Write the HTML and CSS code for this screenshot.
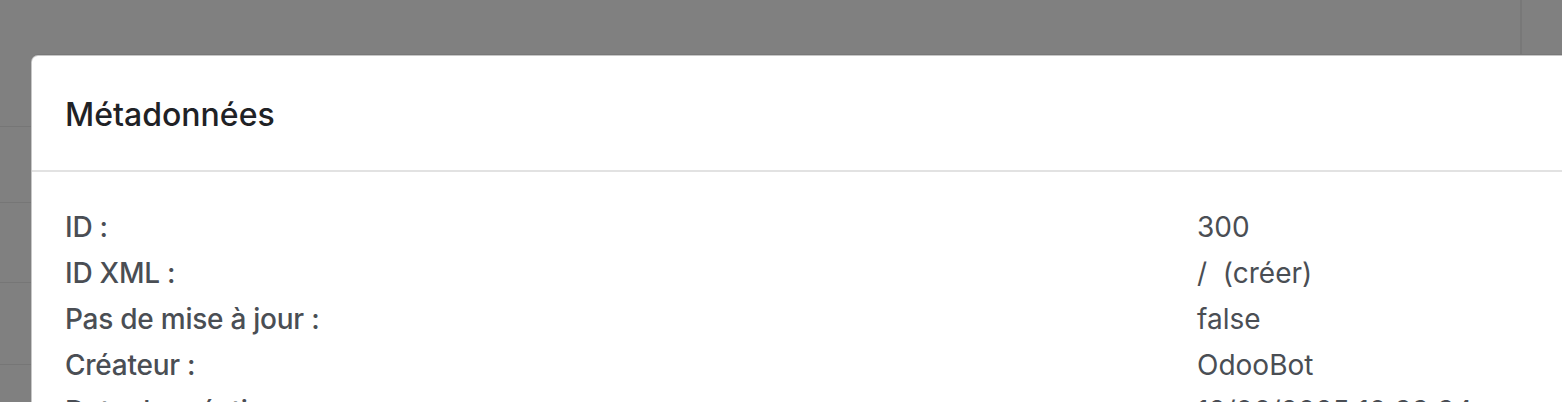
FILE: index.html
```html
<!DOCTYPE html>
<html lang="fr">
<head>
<meta charset="utf-8">
<title>Métadonnées</title>
<link rel="stylesheet" href="styles.css">
</head>
<body>
<div class="backdrop">
  <div class="topbar">
    <div class="topbar-main"></div>
    <div class="topbar-side"></div>
  </div>
  <div class="list">
    <div class="list-row r1"></div>
    <div class="list-row r2"></div>
    <div class="list-row r3"></div>
    <div class="list-row r4"></div>
    <div class="list-row r5"></div>
  </div>
</div>
<div class="modal">
  <header class="modal-header">
    <h4 class="modal-title">Métadonnées</h4>
  </header>
  <div class="modal-body">
    <div class="meta-row"><span class="meta-label">ID :</span><span class="meta-value">300</span></div>
    <div class="meta-row"><span class="meta-label">ID XML :</span><span class="meta-value">/&nbsp; (créer)</span></div>
    <div class="meta-row"><span class="meta-label">Pas de mise à jour :</span><span class="meta-value">false</span></div>
    <div class="meta-row"><span class="meta-label">Créateur :</span><span class="meta-value">OdooBot</span></div>
    <div class="meta-row"><span class="meta-label">Date de création :</span><span class="meta-value">12/06/2025 10:33:34</span></div>
  </div>
</div>
</body>
</html>
```
FILE: styles.css
```css
html, body {
  margin: 0;
  padding: 0;
  height: 100%;
  overflow: hidden;
}
body {
  background: #808080;
  font-family: "Inter", "Noto Sans", sans-serif;
  position: relative;
}
.backdrop {
  display: flex;
  flex-direction: column;
}
.topbar {
  display: flex;
  height: 54px;
}
.topbar-main {
  width: 1520px;
  border-right: 2px solid #787878;
}
.topbar-side {
  flex: 1;
}
.list {
  display: flex;
  flex-direction: column;
}
.list-row {
  border-bottom: 1px solid #767676;
}
.r1 { height: 72px; }
.r2 { height: 75px; }
.r3 { height: 79px; }
.r4 { height: 81px; }
.r5 { height: 81px; }

.modal {
  position: absolute;
  left: 31px;
  top: 55px;
  width: 1620px;
  background: #fff;
  border: 1px solid rgba(0, 0, 0, 0.22);
  border-radius: 7px;
  box-shadow: 0 -1px 0 rgba(0, 0, 0, 0.06);
}
.modal-header {
  height: 116px;
  box-sizing: border-box;
  display: flex;
  align-items: center;
  padding: 2px 33px 0;
  border-bottom: 2px solid #e2e2e2;
}
.modal-title {
  margin: 0;
  font-size: 32px;
  font-weight: 500;
  color: #1f2226;
  letter-spacing: 0;
}
.modal-body {
  padding: 32px 33px;
  display: flex;
  flex-direction: column;
}
.meta-row {
  display: grid;
  grid-template-columns: 1132px 1fr;
  line-height: 46px;
  font-size: 28px;
  color: #4a4e54;
}
.meta-label {
  font-weight: 500;
  letter-spacing: -0.25px;
}
.meta-value {
  font-weight: 400;
}
```
